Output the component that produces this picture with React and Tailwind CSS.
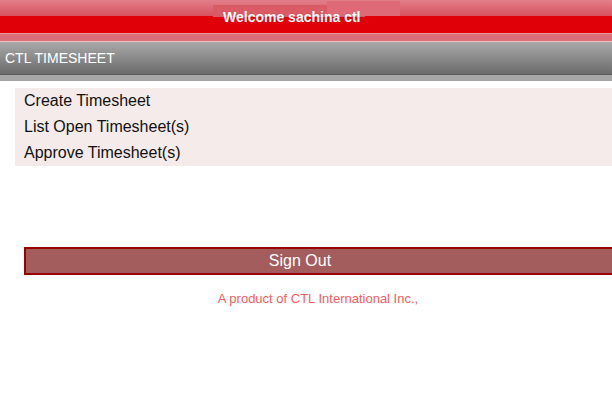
export default function App() {
  const items = ['Create Timesheet', 'List Open Timesheet(s)', 'Approve Timesheet(s)'];

  return (
    <div className="h-[408px] w-[612px] overflow-hidden bg-white font-['Liberation_Sans',Arial,sans-serif]">
      <div className="relative flex h-[33px] items-center bg-[linear-gradient(to_bottom,#e27f8a_0px,#d8525e_16px,#e00008_16px,#e00008_33px)] pl-[223px]">
        <span className="absolute left-[213px] top-[5px] h-[12px] w-[152px] bg-[#da5a66]" />
        <span className="absolute left-[327px] top-[1px] h-[15px] w-[73px] bg-[#dd6a76]" />
        <span className="relative pt-[1px] text-[14px] font-bold text-white">Welcome sachina ctl</span>
      </div>
      <div className="h-[1px] bg-[#e98d96]" />
      <div className="h-[7px] bg-[#dc6f7a]" />
      <div className="h-[1px] bg-[#f0c0c4]" />
      <div className="flex h-[32px] items-center bg-[linear-gradient(to_bottom,#a9a9a9,#6b6b6b)] pl-[5px] text-[14px] text-white">
        CTL TIMESHEET
      </div>
      <div className="h-[1px] bg-[#5e5e5e]" />
      <div className="h-[6px] bg-[#a6a6a6]" />

      <div className="ml-[15px] mt-[7px] bg-[#f5ebea] pl-[9px]">
        {items.map((item) => (
          <div key={item} className="h-[26px] text-[16px] leading-[25px] text-[#111111]">
            {item}
          </div>
        ))}
      </div>

      <button
        type="button"
        className="ml-[24px] mt-[81px] h-[28px] w-[616px] border-2 border-[#990000] bg-[#a35d5d] pr-[64px] text-center text-[16px] leading-[22px] text-white"
      >
        Sign Out
      </button>

      <p className="mt-[16px] pl-[24px] text-center text-[13px] leading-[15px] text-[#f45e62]">
        A product of CTL International Inc.,
      </p>
    </div>
  );
}
